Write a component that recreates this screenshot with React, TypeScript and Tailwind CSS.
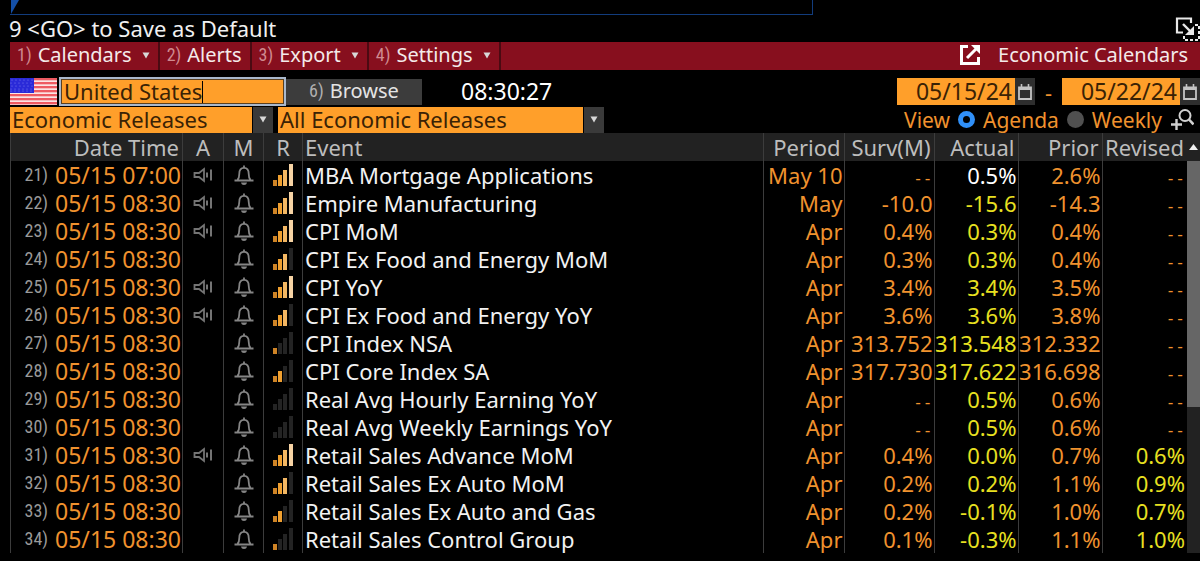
import { useState } from "react";

type Release = {
  id: number;
  time: string;
  audio: boolean;
  relevance: number;
  event: string;
  period: string;
  survey: string;
  actual: string;
  prior: string;
  revised: string;
};

const releases: Release[] = [
  { id: 21, time: "05/15 07:00", audio: true, relevance: 4, event: "MBA Mortgage Applications", period: "May 10", survey: "--", actual: "0.5%", prior: "2.6%", revised: "--" },
  { id: 22, time: "05/15 08:30", audio: true, relevance: 4, event: "Empire Manufacturing", period: "May", survey: "-10.0", actual: "-15.6", prior: "-14.3", revised: "--" },
  { id: 23, time: "05/15 08:30", audio: true, relevance: 4, event: "CPI MoM", period: "Apr", survey: "0.4%", actual: "0.3%", prior: "0.4%", revised: "--" },
  { id: 24, time: "05/15 08:30", audio: false, relevance: 3, event: "CPI Ex Food and Energy MoM", period: "Apr", survey: "0.3%", actual: "0.3%", prior: "0.4%", revised: "--" },
  { id: 25, time: "05/15 08:30", audio: true, relevance: 4, event: "CPI YoY", period: "Apr", survey: "3.4%", actual: "3.4%", prior: "3.5%", revised: "--" },
  { id: 26, time: "05/15 08:30", audio: true, relevance: 3, event: "CPI Ex Food and Energy YoY", period: "Apr", survey: "3.6%", actual: "3.6%", prior: "3.8%", revised: "--" },
  { id: 27, time: "05/15 08:30", audio: false, relevance: 1, event: "CPI Index NSA", period: "Apr", survey: "313.752", actual: "313.548", prior: "312.332", revised: "--" },
  { id: 28, time: "05/15 08:30", audio: false, relevance: 2, event: "CPI Core Index SA", period: "Apr", survey: "317.730", actual: "317.622", prior: "316.698", revised: "--" },
  { id: 29, time: "05/15 08:30", audio: false, relevance: 0, event: "Real Avg Hourly Earning YoY", period: "Apr", survey: "--", actual: "0.5%", prior: "0.6%", revised: "--" },
  { id: 30, time: "05/15 08:30", audio: false, relevance: 0, event: "Real Avg Weekly Earnings YoY", period: "Apr", survey: "--", actual: "0.5%", prior: "0.6%", revised: "--" },
  { id: 31, time: "05/15 08:30", audio: true, relevance: 4, event: "Retail Sales Advance MoM", period: "Apr", survey: "0.4%", actual: "0.0%", prior: "0.7%", revised: "0.6%" },
  { id: 32, time: "05/15 08:30", audio: false, relevance: 3, event: "Retail Sales Ex Auto MoM", period: "Apr", survey: "0.2%", actual: "0.2%", prior: "1.1%", revised: "0.9%" },
  { id: 33, time: "05/15 08:30", audio: false, relevance: 2, event: "Retail Sales Ex Auto and Gas", period: "Apr", survey: "0.2%", actual: "-0.1%", prior: "1.0%", revised: "0.7%" },
  { id: 34, time: "05/15 08:30", audio: false, relevance: 1, event: "Retail Sales Control Group", period: "Apr", survey: "0.1%", actual: "-0.3%", prior: "1.1%", revised: "1.0%" },
];

const menus = [
  { key: 1, label: "Calendars", arrow: true },
  { key: 2, label: "Alerts", arrow: false },
  { key: 3, label: "Export", arrow: true },
  { key: 4, label: "Settings", arrow: true },
];

const narrow = "text-[18px] leading-none font-['Roboto_Condensed','Liberation_Sans',sans-serif]";

const DownArrow = () => (
  <svg width="8" height="7" viewBox="0 0 8 7" aria-hidden="true">
    <path d="M0.5 0.5h7L4 6.5z" fill="#d8d8d8" />
  </svg>
);

const SpeakerIcon = () => (
  <svg className="mx-auto block" width="20" height="16" viewBox="0 0 20 16" fill="none" stroke="#747474" strokeWidth="1.8" role="img" aria-label="Audio">
    <path d="M1.5 6v4h4.500l5 4V2l-5 4z" />
    <path d="M14 5.500v5M18 2.500v11" strokeWidth="2" />
  </svg>
);

const BellIcon = () => (
  <svg className="block" width="20" height="21" viewBox="0 0 20 21" fill="none" stroke="#858585" strokeWidth="1.8" aria-hidden="true">
    <path d="M0.5 15.500h19M3.5 15c1.600-1.600 1.800-3.400 1.800-6.200 0-3.600 1.600-6 4.700-6s4.700 2.400 4.700 6c0 2.800.2 4.600 1.800 6.200" />
    <path d="M10 0.500v2.500" />
    <path d="M7 17.500h6c-.3 1.700-1.400 2.500-3 2.500s-2.700-.8-3-2.500z" fill="#858585" stroke="none" />
  </svg>
);

const barColors = ["#cf8426", "#f0a030", "#f3b763", "#f6d3a4"];

const RelevanceBars = ({ level }: { level: number }) => (
  <svg className="mx-auto block" width="20" height="22" viewBox="0 0 20 22" role="img" aria-label={`Relevance ${level} of 4`}>
    {[6, 11, 16, 22].map((height, i) => (
      <rect
        key={height}
        x={i * 5 + (i === 3 ? 1 : 0)}
        y={22 - height}
        width="4"
        height={height}
        fill={i < level ? barColors[i] : "#242424"}
      />
    ))}
  </svg>
);

const FlagIcon = () => (
  <svg className="block h-[27px] w-[47px]" viewBox="0 0 47 27" role="img" aria-label="United States flag">
    <rect width="47" height="27" fill="#fbe4e4" />
    {[0, 1, 2, 3, 4, 5, 6].map((i) => (
      <rect key={i} y={i * 4} width="47" height="2.3" fill="#ee5a62" />
    ))}
    <rect width="24" height="15" fill="#2a2ad8" />
    {[2, 5, 8, 11, 13].map((y) =>
      [2, 6, 10, 14, 18, 22].map((x) => (
        <circle key={`${x}-${y}`} cx={x - (y % 2)} cy={y} r="0.6" fill="#8080f0" />
      ))
    )}
  </svg>
);

const CalendarIcon = () => (
  <svg width="16" height="18" viewBox="0 0 16 18" fill="none" stroke="#c4c4c4" aria-hidden="true">
    <path d="M2 4.500h12v11.500H2z" strokeWidth="1.800" />
    <path d="M2 5.500h12" strokeWidth="3" />
    <path d="M4.500 1v4M11.500 1v4" strokeWidth="1.600" />
  </svg>
);

const ExportIcon = () => (
  <svg width="20" height="20" viewBox="0 0 20 20" fill="none" stroke="#fff" aria-hidden="true">
    <path d="M8 1.500H1.500v17h17V12" strokeWidth="3" />
    <path d="M7 13L16 4" strokeWidth="3" />
    <path d="M11 0h9v9z" fill="#fff" stroke="none" />
  </svg>
);

const PopOutIcon = () => (
  <svg width="25" height="25" viewBox="0 0 25 25" fill="none" stroke="#e8e8e8" aria-hidden="true">
    <path d="M8 16.500H2v-14h14V7" strokeWidth="2.200" />
    <path d="M8 8l8 8" strokeWidth="2.400" />
    <path d="M19 10v9h-9z" fill="#e8e8e8" stroke="none" />
    <path d="M20 9h4v15H9v-5" strokeWidth="2" strokeDasharray="3 2" />
  </svg>
);

const SearchPlusIcon = () => (
  <svg width="24" height="24" viewBox="0 0 24 24" fill="none" stroke="#d0d0d0" aria-hidden="true">
    <circle cx="15" cy="7.500" r="5.500" strokeWidth="2" />
    <path d="M19 11.500l4.500 5" strokeWidth="2.600" />
    <path d="M6.500 11v11M1 16.500h11" strokeWidth="2.400" />
  </svg>
);

const FilterSelect = ({ label, width }: { label: string; width: string }) => (
  <div className={`relative flex h-[26px] ${width}`}>
    <select
      aria-label={label}
      className="w-full appearance-none border-r-[21px] border-[#3a3a3a] bg-[#ff9f2a] pb-[2px] pl-[2px] text-[22px] leading-6 text-[#3a2205] outline-none"
    >
      <option>{label}</option>
    </select>
    <span className="pointer-events-none absolute inset-y-0 right-0 flex w-[21px] items-center justify-center border-l border-black">
      <DownArrow />
    </span>
  </div>
);

const DateField = ({ label, initial }: { label: string; initial: string }) => {
  const [value, setValue] = useState(initial);

  return (
    <div className="flex h-[27px]">
      <input
        type="text"
        aria-label={label}
        value={value}
        onChange={(e) => setValue(e.target.value)}
        className="w-[118px] bg-[#ff9f2a] pr-[3px] pb-[2px] text-right text-[23px] text-[#3a2205] outline-none"
      />
      <button type="button" aria-label={`Pick ${label}`} className="flex w-5 items-center justify-center bg-[#2e2e2e]">
        <CalendarIcon />
      </button>
    </div>
  );
};

const MenuBar = () => (
  <nav className="ml-[10px] flex h-7 bg-[#870f1e] text-[20px] leading-6 text-[#f4eaea]">
    {menus.map((menu) => (
      <button
        key={menu.key}
        type="button"
        className="flex items-center border-r-2 border-[#4a0a12] pr-2 pb-[2px] pl-[7px]"
      >
        <span className={`mr-[6px] text-[#d08a90] ${narrow}`}>{menu.key})</span>
        {menu.label}
        {menu.arrow && (
          <span className="ml-[10px]">
            <DownArrow />
          </span>
        )}
      </button>
    ))}
    <a href="#calendars" className="ml-auto flex items-center gap-[18px] pr-3 pb-[2px]">
      <ExportIcon />
      Economic Calendars
    </a>
  </nav>
);

const FilterBar = () => {
  const [country, setCountry] = useState("United States");
  const [view, setView] = useState("Agenda");

  return (
    <div className="ml-[10px] flex flex-col">
      <div className="flex h-[29px] items-center">
        <FlagIcon />
        <label className="ml-[2px] flex h-[29px] w-[227px] items-center border-2 border-[#a9b8cc] bg-[#ff9f2a] pl-[3px] ring-1 ring-[#5a4020] ring-inset">
          <input
            type="text"
            aria-label="Country"
            value={country}
            onChange={(e) => setCountry(e.target.value)}
            className="field-sizing-content bg-transparent pb-[2px] text-[22px] leading-6 text-[#3a2205] caret-transparent outline-none"
          />
          <span className="h-[22px] w-px bg-black" />
        </label>
        <button type="button" className="flex h-[26px] w-[136px] items-center justify-center bg-[#3c3c3c] pb-[2px] text-[20px] text-[#e4e4e4]">
          <span className={`mr-[6px] text-[#b0b0b0] ${narrow}`}>6)</span>
          Browse
        </button>
        <time className="ml-[39px] pb-[2px] text-[23px] text-white">08:30:27</time>
        <div className="ml-auto flex items-center">
          <DateField label="Start date" initial="05/15/24" />
          <span className="w-[27px] text-center">-</span>
          <DateField label="End date" initial="05/22/24" />
        </div>
      </div>
      <div className="flex h-[27px] items-center">
        <FilterSelect label="Economic Releases" width="w-[263px]" />
        <div className="w-[5px]" />
        <FilterSelect label="All Economic Releases" width="w-[326px]" />
        <fieldset className="ml-auto flex items-center text-[21px]">
          <span className="mr-[8px]">View</span>
          {["Agenda", "Weekly"].map((option) => (
            <label key={option} className="mr-[8px] flex items-center gap-2">
              <input
                type="radio"
                name="view"
                checked={view === option}
                onChange={() => setView(option)}
                className="size-[17px] appearance-none rounded-full bg-[#505050] checked:border-[5px] checked:border-[#3090f8] checked:bg-black"
              />
              {option}
            </label>
          ))}
          <button type="button" aria-label="Search" className="mr-[6px]">
            <SearchPlusIcon />
          </button>
        </fieldset>
      </div>
    </div>
  );
};

const cell = "border-r border-[#3c3c3c] p-0 pr-px text-right";
const head = "border-r border-[#3c3c3c] p-0 pr-[3px] text-right font-normal";

const Figure = ({ value }: { value: string }) =>
  value === "--" ? (
    <span className="font-['DejaVu_Sans_Mono',monospace] text-[16px] leading-none">--</span>
  ) : (
    value
  );

const ReleaseTable = () => (
  <table className="flex-1 table-fixed border-collapse border-l border-[#3c3c3c] whitespace-nowrap">
    <colgroup>
      <col className="w-[172px]" />
      <col className="w-[41px]" />
      <col className="w-[40px]" />
      <col className="w-[39px]" />
      <col />
      <col className="w-[81px]" />
      <col className="w-[90px]" />
      <col className="w-[84px]" />
      <col className="w-[84px]" />
      <col className="w-[85px]" />
    </colgroup>
    <thead className="bg-[#222] text-[#bdbdbd]">
      <tr className="h-7">
        <th className={head}>Date Time</th>
        <th className="border-r border-[#3c3c3c] p-0 text-center font-normal">A</th>
        <th className="border-r border-[#3c3c3c] p-0 text-center font-normal">M</th>
        <th className="border-r border-[#3c3c3c] p-0 text-center font-normal">R</th>
        <th className="border-r border-[#3c3c3c] p-0 pl-[2px] text-left font-normal">Event</th>
        <th className={head}>Period</th>
        <th className={head}>Surv(M)</th>
        <th className={head}>Actual</th>
        <th className={head}>Prior</th>
        <th className="p-0 pr-[3px] text-right font-normal">Revised</th>
      </tr>
    </thead>
    <tbody>
      {releases.map((row) => (
        <tr key={row.id} className="h-7">
          <td className={cell}>
            <div className="flex items-center justify-end gap-[7px]">
              <span className={`text-[#9a9a9a] ${narrow}`}>{row.id})</span>
              <time className="text-[23px] leading-7">{row.time}</time>
            </div>
          </td>
          <td className="border-r border-[#3c3c3c] p-0">{row.audio && <SpeakerIcon />}</td>
          <td className="border-r border-[#3c3c3c] p-0">
            <button type="button" aria-label={`Set alert for ${row.event}`} className="mx-auto block">
              <BellIcon />
            </button>
          </td>
          <td className="border-r border-[#3c3c3c] p-0">
            <RelevanceBars level={row.relevance} />
          </td>
          <td className="border-r border-[#3c3c3c] p-0 pl-[2px] text-[#f2f2f2]">{row.event}</td>
          <td className={cell}>{row.period}</td>
          <td className={cell}>
            <Figure value={row.survey} />
          </td>
          <td className={`${cell} ${row.id === 21 ? "text-white" : "text-[#e8e020]"}`}>{row.actual}</td>
          <td className={cell}>{row.prior}</td>
          <td className={`p-0 pr-[2px] text-right ${row.revised === "--" ? "" : "text-[#e8e020]"}`}>
            <Figure value={row.revised} />
          </td>
        </tr>
      ))}
    </tbody>
  </table>
);

const ScrollBar = () => (
  <div className="flex w-[13px] flex-col bg-[#222]">
    <button type="button" aria-label="Scroll up" className="flex h-7 items-center justify-center">
      <svg width="9" height="6" viewBox="0 0 9 6" aria-hidden="true">
        <path d="M4.500 0L9 6H0z" fill="#f0f0f0" />
      </svg>
    </button>
    <div className="h-[246px] bg-[#666]" />
  </div>
);

const App = () => (
  <main className="min-h-screen bg-black font-['Noto_Sans','Open_Sans',sans-serif] text-[22px] leading-7 text-[#f0922e]">
    <div className="mr-[387px] ml-[10px] flex h-[15px] border-r border-b border-[#123c7c]">
      <svg width="9" height="14" viewBox="0 0 9 14" aria-hidden="true">
        <path d="M1 0h8L1 14z" fill="#1450a8" />
      </svg>
    </div>
    <div className="flex h-[27px] items-center justify-between pl-[9px] text-[#f0f0f0]">
      <p className="pb-[2px]">9 &lt;GO&gt; to Save as Default</p>
      <button type="button" aria-label="Pop out window">
        <PopOutIcon />
      </button>
    </div>
    <MenuBar />
    <div className="h-[7px]" />
    <FilterBar />
    <div className="ml-[10px] flex">
      <ReleaseTable />
      <ScrollBar />
    </div>
  </main>
);

export default App;
